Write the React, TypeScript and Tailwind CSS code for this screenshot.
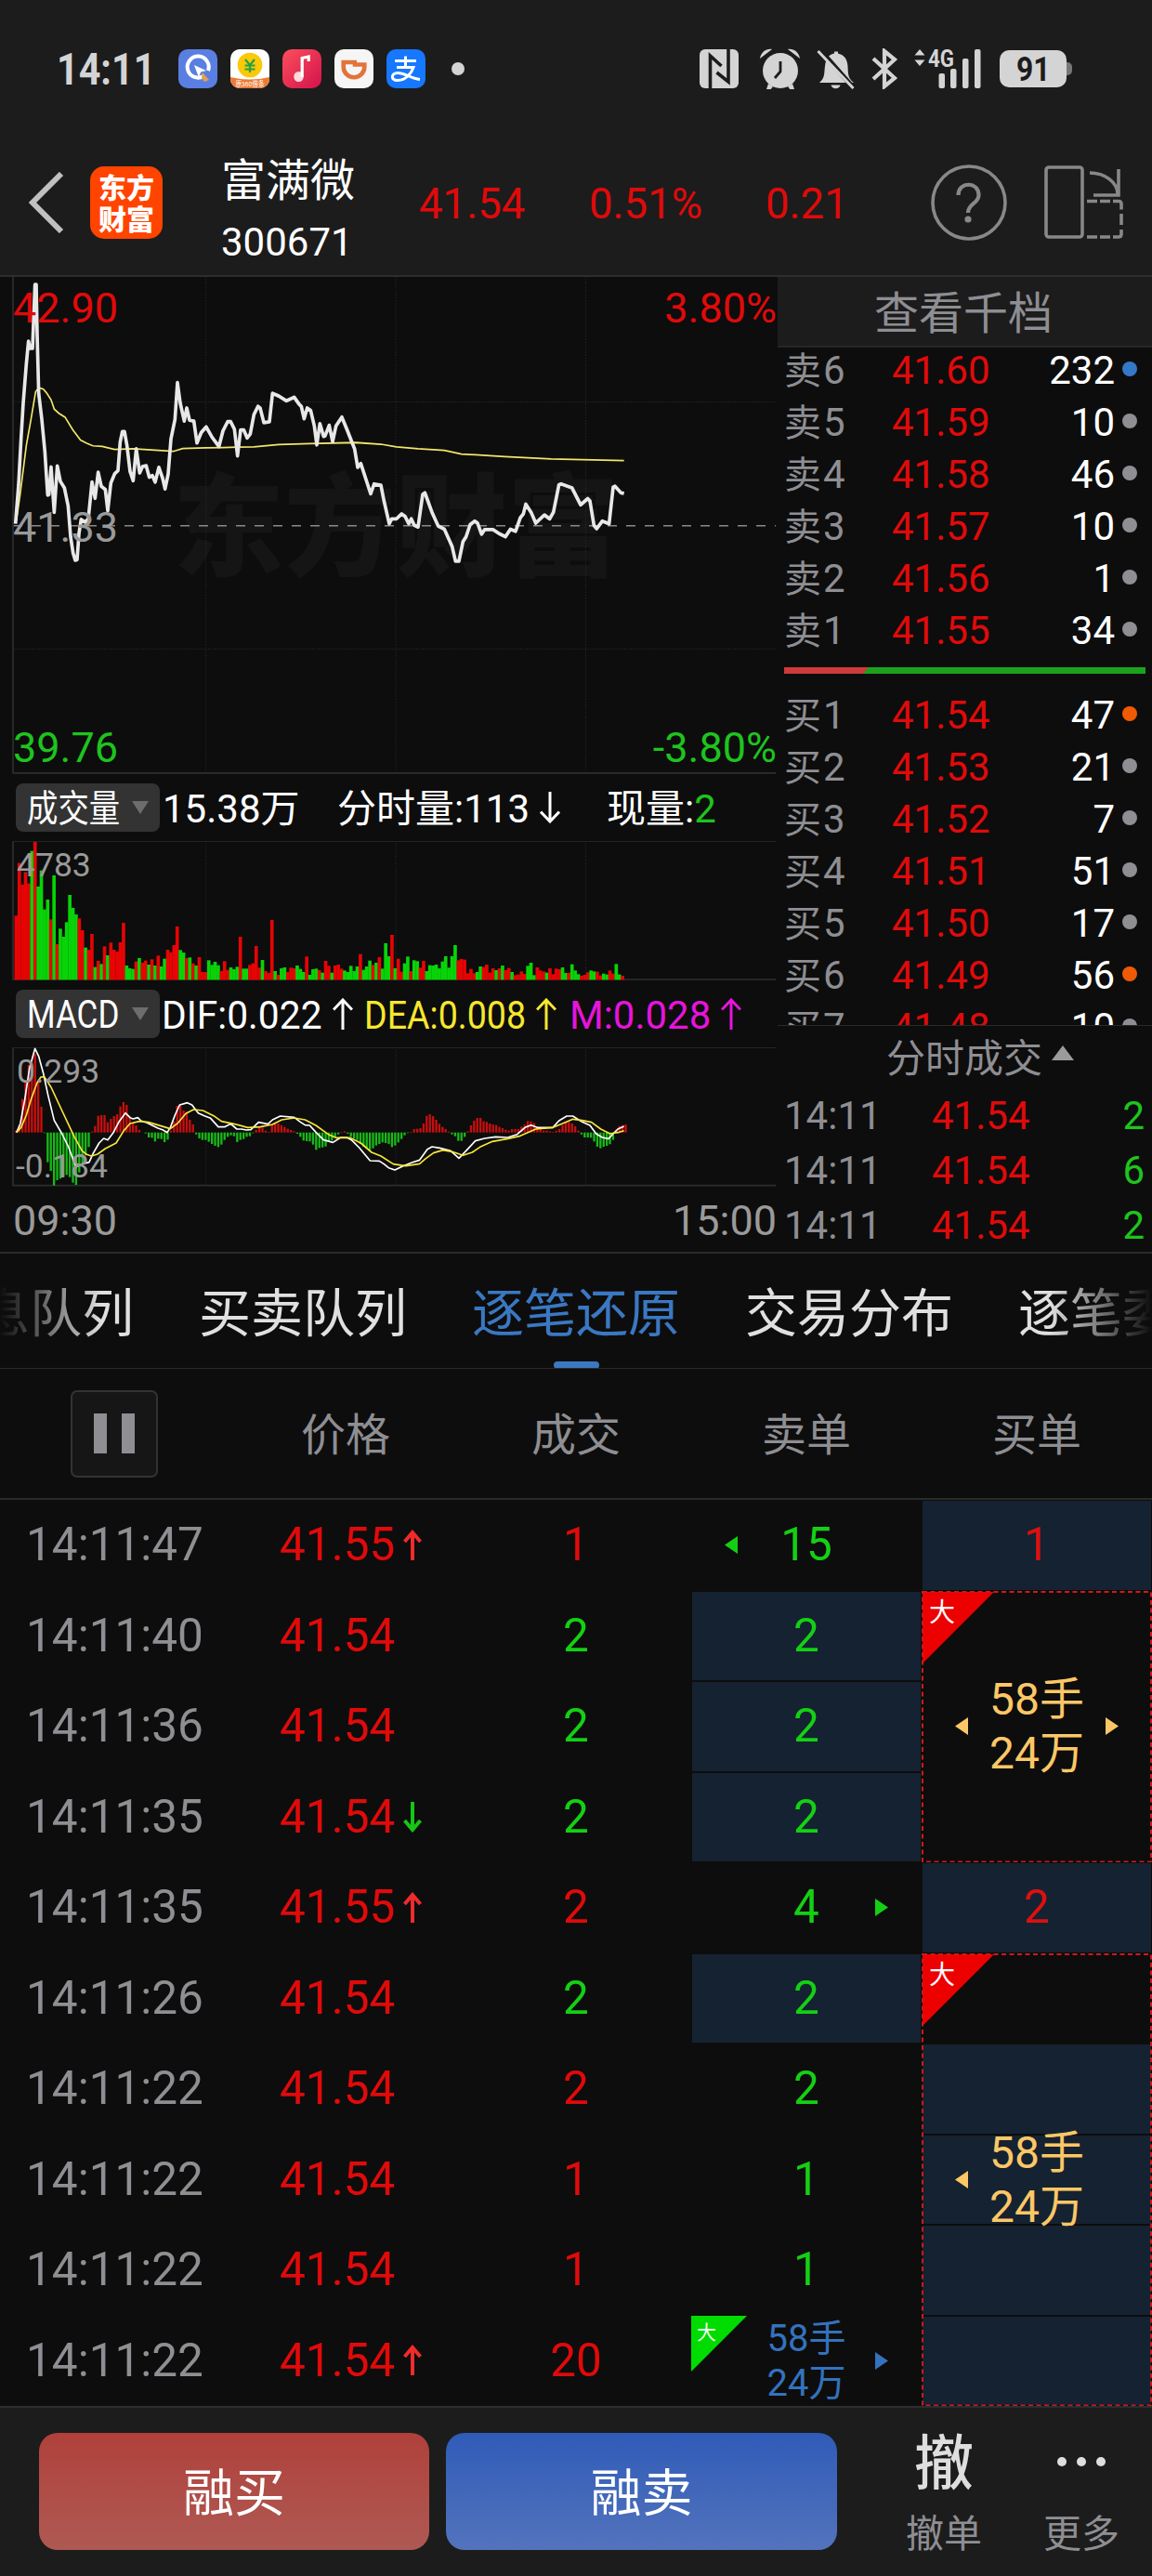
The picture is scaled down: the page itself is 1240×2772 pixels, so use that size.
import React from "react";

const FONT = "font-['Roboto','Noto_Sans_CJK_SC',sans-serif]";

/* ---------- chart data ---------- */

const STEP = 10.2;
const FIRST_X = 52;

const PRICE =
  "50,780 60,660 68,520 75,410 85,290 92,220 97,242 105,242 113,46 117,46 120,200 125,380 135,460 145,560 150,635 154,692 158,690 165,606 175,745 185,603 195,650 208,670 220,725 228,820 236,870 243,892 249,890 255,810 262,767 275,775 285,765 290,720 297,652 307,702 317,622 327,665 340,675 348,740 358,655 370,627 381,617 388,530 395,497 402,497 410,540 420,620 430,648 440,550 451,624 460,605 472,602 482,637 492,632 501,652 513,607 525,640 533,673 543,628 552,520 565,460 573,347 582,410 595,465 603,425 612,462 626,465 636,532 650,500 666,483 685,515 707,543 720,495 735,467 745,467 757,490 767,572 777,492 787,492 798,517 808,505 820,445 833,420 840,425 852,470 870,467 880,380 900,388 925,403 950,392 965,412 973,420 982,458 992,425 1003,432 1015,480 1023,538 1033,473 1045,512 1050,510 1063,478 1074,528 1085,480 1104,453 1120,490 1145,550 1155,607 1165,595 1197,688 1208,658 1230,662 1240,710 1257,780 1265,765 1280,765 1297,750 1308,757 1320,780 1328,765 1338,785 1350,790 1365,690 1372,685 1395,745 1415,787 1435,797 1460,850 1471,895 1482,895 1495,835 1505,820 1518,783 1533,772 1542,778 1555,812 1565,798 1592,798 1615,812 1632,820 1648,797 1665,803 1680,762 1690,750 1698,720 1715,745 1730,778 1758,753 1775,765 1787,745 1805,660 1812,658 1847,670 1875,722 1898,703 1905,710 1918,785 1927,795 1945,772 1967,780 1980,668 1986,665 2005,685 2015,687";

const AVERAGE =
  "53,770 65,690 85,540 100,460 115,375 125,363 140,367 150,378 165,400 175,428 190,441 210,453 235,492 260,523 280,533 300,541 330,543 370,552 430,550 500,554 560,558 590,549 666,547 720,546 820,544 900,537 1000,534 1150,531 1230,536 1280,544 1350,550 1435,555 1490,566 1630,574 1780,581 2015,586";

const VOLUME =
  "R466 R296 R366 R325 R362 G257 R228 G372 G320 G446 G414 R478 G336 R558 G508 G534 G487 G399 G441 G462 R475 R513 G569 R576 R525 G632 R612 G622 R565 G594 R553 R576 R582 R552 R489 G627 G636 G638 R614 G603 R618 R611 G624 R607 G627 R595 G630 G605 R576 R584 R561 R501 G577 G585 R603 G601 R620 G627 R600 R648 R648 G610 G625 G615 G626 R645 R613 R641 G633 G639 G631 R534 G637 G637 R625 R620 R564 R634 G609 R645 R651 R480 G645 R657 G636 G633 R648 R634 R636 G627 G638 G648 R598 G657 G639 G637 R642 G650 R612 R628 G650 R627 R624 R637 G643 G648 G628 G645 G630 R590 G641 G630 G611 R625 G618 R600 G637 G555 G597 R528 G636 R605 R647 G620 G598 R645 G610 G613 R634 R612 G645 G626 G627 G624 G636 G614 G597 G634 G597 G561 R610 R606 R608 R652 R638 R652 G648 G630 R632 R624 R650 R636 G642 R636 G627 R642 R635 G648 R658 R656 R646 R654 G628 G618 G658 R633 R643 R646 G650 R636 R655 R637 R639 G633 G651 R650 G623 G643 G655 R660 R657 R649 G643 G646 R647 R659 G653 G656 R643 R653 G622 G656 R660".split(
    " ",
  );

const HISTOGRAM = [
  1160, 1140, 1058, 1005, 948, 940, 912, 1003, 1083, 1168, 1262, 1290, 1337, 1320, 1315, 1310, 1303, 1310, 1328, 1335,
  1295, 1270, 1240, 1213, 1163, 1145, 1112, 1110, 1110, 1133, 1122, 1113, 1107, 1082, 1068, 1077, 1115, 1135, 1143, 1158,
  1166, 1169, 1182, 1183, 1195, 1186, 1187, 1197, 1189, 1160, 1130, 1080, 1078, 1095, 1100, 1125, 1140, 1172, 1185, 1190,
  1190, 1196, 1203, 1209, 1213, 1205, 1190, 1180, 1175, 1178, 1197, 1190, 1187, 1180, 1178, 1168, 1158, 1148, 1150, 1160,
  1164, 1140, 1135, 1137, 1142, 1148, 1154, 1158, 1162, 1170, 1180, 1192, 1194, 1195, 1205, 1222, 1216, 1214, 1211, 1195,
  1192, 1182, 1172, 1164, 1162, 1170, 1180, 1185, 1190, 1203, 1212, 1218, 1222, 1217, 1208, 1203, 1198, 1200, 1203, 1213,
  1208, 1198, 1187, 1175, 1168, 1164, 1155, 1154, 1152, 1137, 1112, 1107, 1113, 1125, 1138, 1148, 1155, 1163, 1172, 1178,
  1193, 1193, 1180, 1162, 1143, 1128, 1119, 1119, 1130, 1132, 1137, 1140, 1142, 1148, 1152, 1157, 1160, 1155, 1155, 1155,
  1147, 1141, 1129, 1130, 1135, 1148, 1155, 1160, 1160, 1162, 1164, 1160, 1155, 1142, 1132, 1132, 1137, 1146, 1160, 1172,
  1182, 1182, 1183, 1195, 1212, 1217, 1212, 1209, 1204, 1190, 1157, 1145, 1142, 1140,
];

const DIF =
  "53,1166 65,1140 80,1060 95,960 113,895 125,920 140,975 155,1045 175,1127 200,1170 220,1210 245,1277 265,1268 288,1262 300,1235 320,1200 335,1185 348,1190 365,1168 385,1130 405,1103 420,1118 430,1122 445,1118 455,1128 475,1135 490,1142 510,1152 525,1157 540,1166 550,1150 565,1110 580,1077 605,1070 620,1077 640,1103 660,1112 680,1120 705,1148 725,1148 745,1138 765,1155 780,1155 795,1158 810,1157 835,1133 850,1136 865,1139 880,1125 905,1113 950,1117 970,1132 985,1142 1000,1143 1020,1165 1045,1190 1075,1198 1100,1182 1120,1182 1135,1190 1160,1215 1195,1257 1225,1258 1240,1268 1255,1280 1275,1287 1300,1275 1330,1263 1355,1255 1380,1220 1395,1212 1420,1216 1455,1225 1482,1249 1505,1225 1535,1193 1565,1185 1600,1180 1640,1182 1670,1172 1695,1150 1715,1142 1735,1150 1785,1150 1805,1128 1830,1113 1850,1113 1880,1132 1905,1143 1925,1170 1945,1182 1965,1186 1980,1170 1995,1155 2015,1146";

const DEA =
  "53,1166 68,1150 85,1110 100,1060 120,1005 132,987 143,986 165,1020 200,1095 240,1180 265,1225 280,1237 295,1242 315,1236 340,1218 375,1200 400,1160 420,1137 450,1130 480,1133 510,1142 550,1154 575,1135 600,1105 625,1092 655,1095 690,1112 715,1130 755,1138 800,1150 840,1148 880,1140 910,1125 950,1119 985,1125 1020,1143 1060,1172 1085,1183 1130,1183 1165,1200 1200,1230 1230,1242 1270,1268 1310,1274 1355,1267 1375,1250 1400,1232 1430,1223 1460,1228 1495,1240 1525,1230 1550,1213 1590,1195 1640,1186 1680,1177 1730,1155 1785,1150 1815,1138 1850,1123 1880,1127 1910,1133 1940,1155 1970,1170 2000,1165 2015,1160";

/* ---------- small drawings ---------- */

function Arrow({ down = false, className = "" }: { down?: boolean; className?: string }) {
  return (
    <svg viewBox="0 0 22 34" className={`h-[34px] w-[22px] shrink-0 ${down ? "rotate-180" : ""} ${className}`} fill="none" stroke="currentColor" strokeWidth="3">
      <path d="M11 34V2M1 12.5 11 2l10 10.5" />
    </svg>
  );
}

function PriceArrow({ down = false }: { down?: boolean }) {
  return (
    <svg viewBox="0 0 20 34" className={`h-[34px] w-[20px] shrink-0 ${down ? "rotate-180 text-[#14c714]" : "text-[#ef2b2b]"}`} fill="none" stroke="currentColor" strokeWidth="4">
      <path d="M10 33V3M1.500 13 10 3l8.500 10" />
    </svg>
  );
}

function Tri({ dir, className = "" }: { dir: "left" | "right"; className?: string }) {
  return (
    <svg viewBox="0 0 14 19" className={`h-[19px] w-[14px] ${className}`} fill="currentColor">
      {dir === "left" ? <path d="M14 0v19L0 9.5z" /> : <path d="M0 0v19l14-9.5z" />}
    </svg>
  );
}

/* ---------- status bar ---------- */

function StatusBar() {
  return (
    <div className="flex h-[148px] items-center text-[#d4d4d4]">
      <div className="ml-[61px] w-[131px] pt-[2px]">
        <div className="origin-left scale-x-[0.86] text-[48px] leading-none font-bold whitespace-nowrap">14:11</div>
      </div>
      <div className="flex items-center gap-[14px]">
        <svg viewBox="0 0 42 42" className="size-[42px]">
          <rect width="42" height="42" rx="10" fill="#5a7fe2" />
          <path d="M27 29a11.5 11.5 0 1 1 5-6" fill="none" stroke="#fff" strokeWidth="4" />
          <path d="M17 17l13 6-6 1.500-2 6z" fill="#fff" />
          <path d="M26 25l7 8-5 2-3-4z" fill="#e0a050" />
        </svg>
        <svg viewBox="0 0 42 42" className="size-[42px]">
          <defs>
            <clipPath id="coin">
              <rect width="42" height="42" rx="10" />
            </clipPath>
          </defs>
          <g clipPath="url(#coin)">
            <rect width="42" height="42" fill="#fff" />
            <path d="M0 30q21 5 42 0v12H0z" fill="#ee7a33" />
            <circle cx="21" cy="17" r="13.300" fill="#fbc80a" />
            <path d="M16 11l5 6 5-6M15.500 17.500h11M15.500 21.500h11M21 17v8" stroke="#25a244" strokeWidth="2.200" fill="none" />
            <text x="21" y="40" textAnchor="middle" fontSize="8" fill="#fff" fontFamily="Roboto, Noto Sans CJK SC" textLength="31" lengthAdjust="spacingAndGlyphs">
              原360借条
            </text>
          </g>
        </svg>
        <svg viewBox="0 0 42 42" className="size-[42px]">
          <defs>
            <linearGradient id="music" x1="0" y1="0" x2="1" y2="1">
              <stop offset="0" stopColor="#fb4f5c" />
              <stop offset="1" stopColor="#d3124c" />
            </linearGradient>
          </defs>
          <rect width="42" height="42" rx="10" fill="url(#music)" />
          <ellipse cx="17.500" cy="29.500" rx="5.200" ry="5.500" fill="#ffdadd" />
          <path d="M21.200 30V9.500l7-1.500v5" fill="none" stroke="#fff" strokeWidth="3.200" />
        </svg>
        <svg viewBox="0 0 42 42" className="size-[42px]">
          <rect width="42" height="42" rx="10" fill="#f5f5f5" />
          <path d="M24 14H9.700v5a11.300 11.300 0 0 0 22.600 0v-2.500H22V14" fill="none" stroke="#e2733a" strokeWidth="4.600" />
        </svg>
        <svg viewBox="0 0 42 42" className="size-[42px]">
          <rect width="42" height="42" rx="10" fill="#1677ff" />
          <path d="M9 12.500h23M20.500 7.500v12M11 19.500h18c-2 6-8 14-17 14-8 0-7-8 0-8 8 0 14 6 24 7" fill="none" stroke="#fff" strokeWidth="3" />
        </svg>
      </div>
      <div className="ml-[28px] size-[14px] rounded-full bg-[#d4d4d4]" />
      <svg viewBox="0 0 42 42" className="ml-[253px] size-[42px]" fill="none">
        <rect width="42" height="42" rx="6" fill="#d4d4d4" />
        <path d="M11.500 42V7l12 11M31 0v35L18.500 25" stroke="#1c1c1c" strokeWidth="3.600" />
      </svg>
      <svg viewBox="0 0 44 44" className="ml-[23px] h-[44px] w-[44px]" fill="#d4d4d4">
        <ellipse cx="22" cy="24" rx="19" ry="19" />
        <path d="M0 11C1 4 7 0 13 1zM43 11C42 4 36 0 30 1zM9 38l5 3-3 4-4-1zM35 38l-5 3 3 4 4-1z" />
        <path d="M22 14v11l-6 7" stroke="#1c1c1c" strokeWidth="2.800" fill="none" />
      </svg>
      <svg viewBox="0 0 42 44" className="ml-[17px] h-[44px] w-[42px]" fill="#d4d4d4">
        <path d="M3 37c6-5 5-10 6-18C10 10 14 6.500 19 5.500V3.500h4v2C29 7 33 11 33.500 19c.5 9 0 13 6.500 18z" />
        <path d="M15.500 39.500h10c-1 5-9 5-10 0z" />
        <path d="M4 2l37 42" stroke="#1c1c1c" strokeWidth="5" />
        <path d="M1.500 3l38 40" stroke="#d4d4d4" strokeWidth="3" />
      </svg>
      <svg viewBox="0 0 28 44" className="ml-[17px] h-[44px] w-[28px]" fill="none" stroke="#d4d4d4" strokeWidth="4.200">
        <path d="M2 11l23 21-11 9V3l11 9L2 33" />
      </svg>
      <svg viewBox="0 0 72 44" className="ml-[18px] h-[44px] w-[72px]" fill="#d4d4d4">
        <path d="M6 1l5.500 6.500H.5zM6 19l5.500-6.500H.5z" />
        <text x="15" y="19.500" fontSize="25" fontWeight="700" fontFamily="Roboto" textLength="28" lengthAdjust="spacingAndGlyphs">
          4G
        </text>
        <rect x="26.500" y="27" width="6.500" height="16" rx="2" />
        <rect x="39" y="22" width="6.500" height="21" rx="2" />
        <rect x="52" y="11" width="6.500" height="32" rx="2" />
        <rect x="65" y="1" width="6.500" height="42" rx="2" />
      </svg>
      <div className="ml-[20px] flex h-[40px] w-[72px] items-center justify-center rounded-[10px] bg-[#d4d4d4]">
        <span className="scale-x-[0.86] text-[37px] leading-none font-bold text-[#1c1c1c]">91</span>
      </div>
      <div className="h-[14px] w-[6px] rounded-r-[5px] bg-[#777]" />
    </div>
  );
}

/* ---------- header ---------- */

function Header() {
  return (
    <header className="h-[298px] shrink-0 border-b-2 border-[#2e2e2e] bg-[#1c1c1c]">
      <StatusBar />
      <div className="flex h-[140px] items-center text-[45.500px] text-[#e00a0a]">
        <svg viewBox="0 0 38 66" className="ml-[31px] h-[66px] w-[38px]" fill="none" stroke="#c0c0c0" strokeWidth="6">
          <path d="M35 2 4 33l31 31" />
        </svg>
        <div className="ml-[28px] flex size-[78px] flex-col items-center justify-center rounded-[15px] bg-[#ff4400] pt-[3px] text-[30px] leading-[34px] font-black text-white">
          <span>东方</span>
          <span>财富</span>
        </div>
        <div className="ml-[63px] flex w-[213px] flex-col pt-[19px] text-white">
          <span className="text-[48px] leading-[66px]">富满微</span>
          <span className="text-[42px] leading-[66px]">300671</span>
        </div>
        <div className="w-[183px] pt-[4px] leading-none">41.54</div>
        <div className="w-[190px] pt-[4px] leading-none">0.51%</div>
        <div className="w-[178px] pt-[4px] leading-none">0.21</div>
        <svg viewBox="0 0 82 82" className="h-[82px] w-[82px]" fill="none" stroke="#888" strokeWidth="3.600">
          <circle cx="41" cy="41" r="39" />
          <path d="M29.500 33c0-15 22-15 22 0 0 9-11.500 9-11.500 19" strokeWidth="4.200" />
          <circle cx="40" cy="59" r="3.600" fill="#888" stroke="none" />
        </svg>
        <svg viewBox="0 0 86 80" className="ml-[40px] h-[80px] w-[86px]" fill="none" stroke="#888" strokeWidth="3.600">
          <rect x="2" y="2" width="39" height="75" rx="3" />
          <path d="M46 38.500h11M60 38.500h11M74 38.500h6q3 0 3 3v6M83 52v12M83 69v5q0 3-3 3h-6M71 77H60M57 77H46" />
          <path d="M49 8c16 0 30 10 30 23M80 4v28H53" />
        </svg>
      </div>
    </header>
  );
}

/* ---------- charts ---------- */

function Grid({ top, bottom }: { top: number; bottom: number }) {
  return (
    <g stroke="#2c2c2c" strokeWidth="3" strokeDasharray="3 5">
      <path d={`M665 ${top}V${bottom}M1278 ${top}V${bottom}M1891 ${top}V${bottom}`} />
    </g>
  );
}

function PriceChart() {
  return (
    <div className="relative h-[535px] w-[837px] shrink-0 text-[45px] leading-none">
      <div className="absolute top-[207px] left-[186px] text-[120px] leading-[130px] font-black whitespace-nowrap text-[#151515]">东方财富</div>
      <svg viewBox="0 22.8 2511 1525.3" preserveAspectRatio="none" className="absolute inset-0 size-full" fill="none">
        <Grid top={22} bottom={1545} />
        <path d="M42 406H2505M42 1164H2505" stroke="#2c2c2c" strokeWidth="3" strokeDasharray="3 4" />
        <path d="M42 786H2505" stroke="#8a8a8a" strokeWidth="4" strokeDasharray="30 30" />
        <path d="M42 22V1545H2505" stroke="#2e2e2e" strokeWidth="5" />
        <polyline points={AVERAGE} stroke="#f2e66a" strokeWidth="5" />
        <polyline points={PRICE} stroke="#e8e8e8" strokeWidth="11" strokeLinejoin="round" />
      </svg>
      <span className="absolute top-[11px] left-[14px] text-[#e00a0a]">42.90</span>
      <span className="absolute top-[247px] left-[14px] text-[#9a9a9a]">41.33</span>
      <span className="absolute top-[484px] left-[14px] text-[#1ec41e]">39.76</span>
      <span className="absolute top-[11px] right-[1px] text-[#e00a0a]">3.80%</span>
      <span className="absolute top-[484px] right-[1px] text-[#1ec41e]">-3.80%</span>
    </div>
  );
}

function Pill({ children }: { children: React.ReactNode }) {
  return (
    <div className="ml-[17px] flex h-[52px] w-[155px] shrink-0 items-center rounded-[8px] bg-[#333]">
      <div className="w-[125px] pt-[2px] pl-[12px]">
        <div className="origin-left scale-x-[0.835] whitespace-nowrap">{children}</div>
      </div>
      <svg viewBox="0 0 18 14" className="h-[14px] w-[18px]" fill="#6d6d6d">
        <path d="M0 0h18L9 14z" />
      </svg>
    </div>
  );
}

function VolumeChart() {
  return (
    <div className="relative h-[150px] w-[837px] shrink-0">
      <svg viewBox="0 225 2511 450" preserveAspectRatio="none" className="absolute inset-0 size-full" fill="none">
        <Grid top={225} bottom={672} />
        <path d="M42 226H2505" stroke="#2a2a2a" strokeWidth="3" />
        <path d="M42 226V672H2505" stroke="#2e2e2e" strokeWidth="5" />
        {VOLUME.map((v, i) => {
          const top = Number(v.slice(1));
          return <rect key={i} x={FIRST_X - 5.5 + STEP * i} y={top} width={11} height={673 - top} fill={v[0] === "R" ? "#e60404" : "#08d408"} />;
        })}
      </svg>
      <span className="absolute top-[9px] left-[18px] text-[35.500px] leading-none text-[#9a9a9a]">4783</span>
    </div>
  );
}

function MacdChart() {
  return (
    <div className="relative h-[150px] w-[837px] shrink-0 text-[35.500px] leading-none text-[#9a9a9a]">
      <svg viewBox="0 891 2511 450" preserveAspectRatio="none" className="absolute inset-0 size-full" fill="none">
        <Grid top={891} bottom={1337} />
        <path d="M42 892H2505" stroke="#2a2a2a" strokeWidth="3" />
        <path d="M42 892V1337H2505" stroke="#2e2e2e" strokeWidth="5" />
        {HISTOGRAM.map((v, i) => (
          <rect key={i} x={FIRST_X - 3.5 + STEP * i} y={Math.min(v, 1166)} width={7} height={Math.abs(v - 1166)} fill={v < 1166 ? "#c80e0e" : "#18b818"} />
        ))}
        <polyline points={DIF} stroke="#fff" strokeWidth="5" strokeLinejoin="round" />
        <polyline points={DEA} stroke="#f6e63a" strokeWidth="5" strokeLinejoin="round" />
      </svg>
      <span className="absolute top-[9px] left-[18px]">0.293</span>
      <span className="absolute top-[111px] left-[17px]">-0.184</span>
    </div>
  );
}

function Charts() {
  return (
    <div className="flex w-[837px] flex-col text-[42px] leading-none text-white">
      <PriceChart />
      <div className="flex h-[72px] shrink-0 items-center whitespace-nowrap">
        <Pill>
          <span className="text-[40px]">成交量</span>
        </Pill>
        <span className="ml-[3px] w-[188px] pt-[3px]">15.38万</span>
        <span className="w-[218px] pt-[3px]">分时量:113</span>
        <Arrow down />
        <span className="ml-[50px] pt-[3px]">现量:</span>
        <span className="pt-[3px] text-[#1ec41e]">2</span>
      </div>
      <VolumeChart />
      <div className="flex h-[72px] shrink-0 items-center whitespace-nowrap">
        <Pill>MACD</Pill>
        <span className="ml-[2px] w-[184px] pt-[3px]">
          <span className="block origin-left scale-x-[0.97]">DIF:0.022</span>
        </span>
        <Arrow />
        <span className="ml-[12px] flex w-[221px] items-center text-[#f6e82e]">
          <span className="w-[185px] pt-[3px]">
            <span className="block w-[195px] origin-left scale-x-[0.895]">DEA:0.008</span>
          </span>
          <Arrow />
        </span>
        <span className="flex items-center text-[#e714dc]">
          <span className="w-[163px] pt-[3px]">M:0.028</span>
          <Arrow />
        </span>
      </div>
      <MacdChart />
      <div className="flex h-[70px] shrink-0 items-center justify-between pt-[2px] pr-[1px] pl-[14px] text-[45px] text-[#9a9a9a]">
        <span>09:30</span>
        <span>15:00</span>
      </div>
    </div>
  );
}

/* ---------- order book ---------- */

type Level = [string, string, string, "gray" | "blue" | "orange"];

const SELLS: Level[] = [
  ["卖6", "41.60", "232", "blue"],
  ["卖5", "41.59", "10", "gray"],
  ["卖4", "41.58", "46", "gray"],
  ["卖3", "41.57", "10", "gray"],
  ["卖2", "41.56", "1", "gray"],
  ["卖1", "41.55", "34", "gray"],
];

const BUYS: Level[] = [
  ["买1", "41.54", "47", "orange"],
  ["买2", "41.53", "21", "gray"],
  ["买3", "41.52", "7", "gray"],
  ["买4", "41.51", "51", "gray"],
  ["买5", "41.50", "17", "gray"],
  ["买6", "41.49", "56", "orange"],
  ["买7", "41.48", "10", "gray"],
];

const DOT = { gray: "bg-[#8e8e93]", blue: "bg-[#3478c8]", orange: "bg-[#f05a05]" };

function LevelRow({ level }: { level: Level }) {
  const [name, price, volume, dot] = level;
  return (
    <div className="flex h-[56px] shrink-0 items-center pl-[7px]">
      <span className="w-[116px] text-[#8e8e93]">
        <span className="text-[40px]">{name[0]}</span>
        <span className="ml-[2px]">{name[1]}</span>
      </span>
      <span className="w-[110px] text-[#e00a0a]">{price}</span>
      <span className="w-[130px] text-right text-white">{volume}</span>
      <span className={`mb-[4px] ml-[8px] size-[16px] rounded-full ${DOT[dot]}`} />
    </div>
  );
}

function OrderBook() {
  return (
    <div className="flex w-[403px] flex-col text-[42px] leading-none">
      <div className="flex h-[76px] shrink-0 items-center justify-center border-b-2 border-[#262626] bg-[#1c1c1c] pt-[6px] pr-[3px] text-[48px] text-[#8e8e93]">查看千档</div>
      <div className="flex h-[730px] shrink-0 flex-col overflow-hidden border-b border-[#2a2a2a]">
        <div className="-mt-[3px]">
          {SELLS.map((l) => (
            <LevelRow key={l[0]} level={l} />
          ))}
        </div>
        <svg viewBox="0 0 389 7" className="mt-[11px] ml-[7px] h-[7px] w-[389px] shrink-0">
          <rect width="389" height="7" fill="#1ca31c" />
          <path d="M0 0h91l-6 7H0z" fill="#cf3a3a" />
        </svg>
        <div className="mt-[17px]">
          {BUYS.map((l) => (
            <LevelRow key={l[0]} level={l} />
          ))}
        </div>
      </div>
      <div className="flex h-[66px] shrink-0 items-center pt-[6px] pl-[117px] text-[#8e8e93]">
        <span>分时成交</span>
        <svg viewBox="0 0 24 16" className="mb-[14px] ml-[10px] h-[16px] w-[24px]" fill="#9b9b9b">
          <path d="M12 0l12 16H0z" />
        </svg>
      </div>
      {["2", "6", "2"].map((v, i) => (
        <div key={i} className="flex h-[59px] shrink-0 items-center pt-[3px] pr-[8px] pl-[7px]">
          <span className="w-[159px] text-[#8e8e93]">14:11</span>
          <span className="text-[#e00a0a]">41.54</span>
          <span className="ml-auto text-[#1ec41e]">{v}</span>
        </div>
      ))}
    </div>
  );
}

/* ---------- tick table ---------- */

type Tick = [string, string, "" | "up" | "down", string, "r" | "g"];

const TICKS: Tick[] = [
  ["14:11:47", "41.55", "up", "1", "r"],
  ["14:11:40", "41.54", "", "2", "g"],
  ["14:11:36", "41.54", "", "2", "g"],
  ["14:11:35", "41.54", "down", "2", "g"],
  ["14:11:35", "41.55", "up", "2", "r"],
  ["14:11:26", "41.54", "", "2", "g"],
  ["14:11:22", "41.54", "", "2", "r"],
  ["14:11:22", "41.54", "", "1", "r"],
  ["14:11:22", "41.54", "", "1", "r"],
  ["14:11:22", "41.54", "up", "20", "r"],
];

const SELL_CELLS: { v: string; fill?: boolean; tri?: "left" | "right" }[] = [
  { v: "15", tri: "left" },
  { v: "2", fill: true },
  { v: "2", fill: true },
  { v: "2", fill: true },
  { v: "4", tri: "right" },
  { v: "2", fill: true },
  { v: "2" },
  { v: "1" },
  { v: "1" },
];

function SellColumn() {
  return (
    <div className="flex w-[248px] flex-col text-[#14d014]">
      {SELL_CELLS.map((c, i) => (
        <div key={i} className="h-[97.500px] py-[1px] pr-[1px] pl-[1px]">
          <div className={`flex h-full items-center justify-center ${c.fill ? "bg-[#152231]" : ""}`}>
            <Tri dir="left" className={c.tri === "left" ? "" : "invisible"} />
            <span className="w-[148px] text-center">{c.v}</span>
            <Tri dir="right" className={c.tri === "right" ? "" : "invisible"} />
          </div>
        </div>
      ))}
      <div className="relative flex h-[97.500px] items-center justify-center text-[40px] text-[#3472bd]">
        <svg viewBox="0 0 60 60" className="absolute top-0 left-0 size-[60px]">
          <path d="M0 0h60L0 60z" fill="#00dc00" />
        </svg>
        <span className="absolute top-[8px] left-[6px] text-[21px] leading-none text-white">大</span>
        <Tri dir="left" className="invisible" />
        <span className="w-[148px] pt-[2px] text-center leading-[48px]">
          58手
          <br />
          24万
        </span>
        <Tri dir="right" />
      </div>
    </div>
  );
}

function BigOrder({ right, children }: { right: boolean; children?: React.ReactNode }) {
  return (
    <div className="relative w-full">
      {children}
      <svg viewBox="0 0 77 77" className="absolute top-[1px] left-[1px] size-[77px]">
        <path d="M0 0h77L0 77z" fill="#ec0000" />
      </svg>
      <span className="absolute top-[10px] left-[8px] text-[28px] leading-none text-white">大</span>
      <svg className="absolute inset-0 size-full" fill="none">
        <rect x="1" y="1" width="246" className="h-[calc(100%-2px)]" stroke="#d01818" strokeWidth="2" strokeDasharray="5 3.500" />
      </svg>
      <div className="absolute inset-0 flex items-center justify-center text-[48px] text-[#fcc766]">
        <Tri dir="left" />
        <span className="w-[148px] pt-[1px] text-center leading-[58px]">
          58手
          <br />
          24万
        </span>
        <Tri dir="right" className={right ? "" : "invisible"} />
      </div>
    </div>
  );
}

function BuyColumn() {
  const single = (v: string) => (
    <div className="h-[97.500px] p-[1px]">
      <div className="flex h-full items-center justify-center bg-[#152231]">{v}</div>
    </div>
  );
  return (
    <div className="flex w-[248px] flex-col text-[#dc1010]">
      {single("1")}
      <BigOrder right>
        <div className="h-[292.500px]" />
      </BigOrder>
      {single("2")}
      <BigOrder right={false}>
        <div className="h-[97.500px]" />
        {[0, 1, 2, 3].map((i) => (
          <div key={i} className="h-[97.500px] p-[1px]">
            <div className="h-full bg-[#152231]" />
          </div>
        ))}
      </BigOrder>
    </div>
  );
}

function TickTable() {
  return (
    <div className="flex h-[975px] shrink-0 text-[49.500px] leading-none">
      <div className="w-[744px]">
        {TICKS.map(([time, price, move, count, tone], i) => (
          <div key={i} className="flex h-[97.500px] items-center">
            <span className="w-[301px] pl-[28px] text-[#8e8e93]">{time}</span>
            <span className="w-[133px] text-[#e00a0a]">{price}</span>
            <span className="w-[62px]">{move && <PriceArrow down={move === "down"} />}</span>
            <span className={`w-[248px] text-center ${tone === "r" ? "text-[#e00a0a]" : "text-[#14d014]"}`}>{count}</span>
          </div>
        ))}
      </div>
      <SellColumn />
      <BuyColumn />
    </div>
  );
}

/* ---------- page ---------- */

export default function App() {
  return (
    <div className={`flex h-[2772px] w-[1240px] flex-col overflow-hidden bg-[#0d0d0d] ${FONT}`}>
      <Header />

      <section className="flex h-[1051px] shrink-0 border-b-2 border-[#2a2a2a]">
        <Charts />
        <OrderBook />
      </section>

      <nav className="relative h-[124px] shrink-0 overflow-hidden border-b border-[#2a2a2a]">
        <div className="-ml-[80px] flex h-[124px] w-[1500px] items-center gap-[70px] text-[56px] leading-none whitespace-nowrap text-[#e0e0e0]">
          <span className="pt-[5px]">信息队列</span>
          <span className="pt-[5px]">买卖队列</span>
          <div className="relative flex h-full items-center text-[#3a78c3]">
            <span className="pt-[5px]">逐笔还原</span>
            <div className="absolute bottom-0 left-[88px] h-[8px] w-[49px] rounded-full bg-[#3a78c3]" />
          </div>
          <span className="pt-[5px]">交易分布</span>
          <span className="pt-[5px]">逐笔委托</span>
        </div>
        <div className="absolute inset-y-0 left-0 w-[110px] bg-linear-to-r from-[#0d0d0d] to-transparent" />
        <div className="absolute inset-y-0 right-0 w-[110px] bg-linear-to-l from-[#0d0d0d] to-transparent" />
      </nav>

      <div className="grid h-[141px] shrink-0 grid-cols-5 items-center border-b-2 border-[#2a2a2a] text-center text-[48px] leading-none text-[#8e8e93]">
        <div className="ml-[76px] flex h-[94px] w-[94px] items-center justify-center gap-[16px] rounded-[7px] border-2 border-[#333] bg-[#161616]">
          <div className="h-[43px] w-[14px] bg-[#8e8e93]" />
          <div className="h-[43px] w-[14px] bg-[#8e8e93]" />
        </div>
        <span className="pt-[5px]">价格</span>
        <span className="pt-[5px]">成交</span>
        <span className="pt-[5px]">卖单</span>
        <span className="pt-[5px]">买单</span>
      </div>

      <TickTable />

      <footer className="flex h-[183px] shrink-0 items-start border-t-2 border-[#2e2e2e] bg-[#1c1c1c] pt-[27px] pl-[42px] leading-none">
        <button className="flex h-[126px] w-[420px] items-center justify-center rounded-[20px] bg-linear-to-b from-[#b0403b] to-[#ae5953] pt-[5px] text-[55px] text-white">融买</button>
        <button className="ml-[18px] flex h-[126px] w-[421px] items-center justify-center rounded-[20px] bg-linear-to-b from-[#2f5bb8] to-[#5373bc] pt-[5px] text-[55px] text-white">融卖</button>
        <div className="ml-[41px] flex w-[148px] flex-col items-center text-[#8e8e93]">
          <span className="pt-[3px] text-[64px] leading-[62px] font-medium text-[#dedede]">撤</span>
          <span className="mt-[24px] text-[41px]">撤单</span>
        </div>
        <div className="flex w-[148px] flex-col items-center text-[#8e8e93]">
          <span className="flex h-[62px] items-center gap-[11px]">
            <i className="size-[10px] rounded-full bg-[#dedede]" />
            <i className="size-[10px] rounded-full bg-[#dedede]" />
            <i className="size-[10px] rounded-full bg-[#dedede]" />
          </span>
          <span className="mt-[27px] text-[41px]">更多</span>
        </div>
      </footer>
    </div>
  );
}
